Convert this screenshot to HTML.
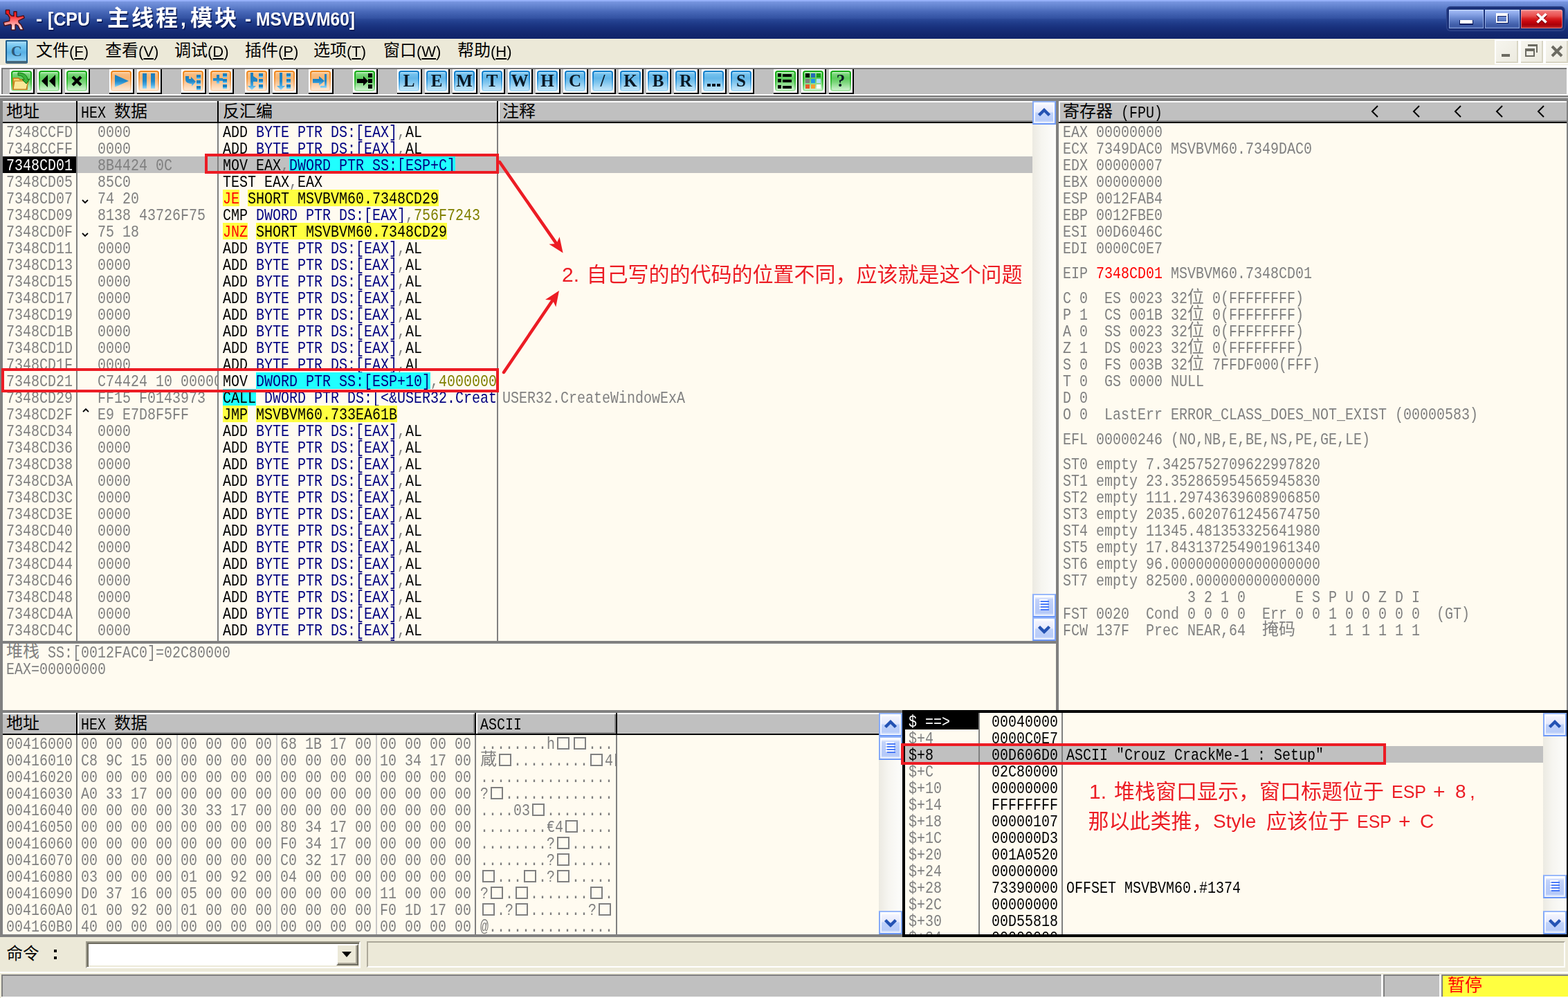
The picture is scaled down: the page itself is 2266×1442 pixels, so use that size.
<!DOCTYPE html><html><head><meta charset="utf-8"><title>OllyDbg</title><style>html,body{margin:0;padding:0;overflow:hidden}
body{width:2266px;height:1442px;overflow:hidden;background:#808080;position:relative;font-family:"Liberation Sans",sans-serif}
.a{position:absolute}
svg.a{overflow:visible}
.m{will-change:transform;position:absolute;height:24px;line-height:24px;font-family:"Liberation Mono",monospace;font-size:20px;white-space:pre;color:#000;transform:scaleY(1.215);transform-origin:0 4.84px}
.m i{font-style:normal}
.k{color:#000}.g{color:#808080}.b{color:#000080}.r{color:#f00}.o{color:#808000}.w{color:#fff}
.G{color:#808080}
.tt{will-change:transform;text-shadow:1.5px 1.5px 0 #0c1c58;top:9px;height:38px;line-height:38px;font-weight:bold;font-size:28px;color:#fff;white-space:pre}
.mn{will-change:transform;top:58px;height:34px;line-height:34px;font-size:22px;color:#000;white-space:pre}
.tl{will-change:transform;top:102px;width:30px;height:30px;line-height:30px;text-align:center;font:bold 25px/30px "Liberation Serif",serif;color:#0a1824}
.cj{position:absolute;white-space:pre;font-family:"Liberation Sans","Noto Sans CJK SC",sans-serif;color:#000}
.c24{font-size:24px;line-height:24px;height:24px}
.c30{font-size:30px;line-height:30px;height:30px;color:#ec1c24}
</style></head><body><svg width="0" height="0" style="position:absolute"><defs><linearGradient id="bg" x1="0" y1="0" x2="0" y2="1"><stop offset="0" stop-color="#1a7cbc"/><stop offset=".5" stop-color="#2088c8"/><stop offset=".75" stop-color="#48a8e0"/><stop offset="1" stop-color="#98dcfc"/></linearGradient></defs></svg><div class="a" style="left:0;top:0;width:2266px;height:56px;background:linear-gradient(#95b0f9 0,#95b0f9 2px,#7a98e2 2px,#7391dc 4px,#6080cc 10px,#4b6bbb 16px,#3c5cac 22px,#3453a3 26px,#294797 28px,#1e3a88 34px,#18307c 40px,#12266c 50px,#10246a 56px)"></div>
<svg class="a" style="left:4px;top:12px" width="32" height="32" viewBox="0 0 16 16"><defs><linearGradient id="sp" x1="0" y1="0" x2="0" y2="1"><stop offset="0" stop-color="#ff0c10"/><stop offset=".3" stop-color="#ff2c30"/><stop offset=".5" stop-color="#ff6a6a"/><stop offset=".7" stop-color="#ffa0a0"/><stop offset=".88" stop-color="#ffd8d8"/><stop offset="1" stop-color="#fff4f0"/></linearGradient></defs><g fill="url(#sp)" stroke="#4a1018" stroke-width=".7" stroke-linejoin="round"><path d="M2.2 1.2h2.6v2.6l1.4 1.6L8 5.6V2.4h2v3.6l1 .3 4-1 .6 1.6-4.2 2 .2 1.4 1.6 1.6 1.8 3.6h-2.4l-1.6-3-1.6-.9-.4.3V15.6H6.2V12l-.6-.4-4.4 1-.6-2.4 4.2-1 .2-2.4L3.6 4.6 2.2 4z"/></g></svg>
<div class="a tt" style="left:52px"><span style="display:inline-block;transform-origin:0 50%;transform:scaleX(0.965)">-</span></div>
<div class="a tt" style="left:69px"><span style="display:inline-block;transform-origin:0 50%;transform:scaleX(0.891)">[CPU</span></div>
<div class="a tt" style="left:139px"><span style="display:inline-block;transform-origin:0 50%;transform:scaleX(0.965)">-</span></div>
<div class="a tt" style="left:354px"><span style="display:inline-block;transform-origin:0 50%;transform:scaleX(0.965)">-</span></div>
<div class="a tt" style="left:370px"><span style="display:inline-block;transform-origin:0 50%;transform:scaleX(0.875)">MSVBVM60]</span></div>
<div class="a tt" style="left:155px;top:7px;font-size:32px;letter-spacing:3px;font-family:'Liberation Sans','Noto Sans CJK SC',sans-serif">主线程</div>
<div class="a tt" style="left:275px;top:7px;font-size:32px;letter-spacing:3px;font-family:'Liberation Sans','Noto Sans CJK SC',sans-serif">模块</div>
<div class="a tt" style="left:261px">,</div>
<div class="a" style="left:2091px;top:10px;width:170px;height:34px;border-radius:5px;background:#1b3179;box-shadow:0 0 0 1px #33498f"></div>
<div class="a" style="left:2094px;top:14px;width:50px;height:27px;background:linear-gradient(#cfe0ff 0,#9fb8f4 2px,#809de0 8px,#6684cc 13px,#4f6eb8 18px,#3d5aa5 23px,#4a68b4 27px);box-shadow:inset 0 0 0 1px rgba(200,220,255,.55)"></div>
<div class="a" style="left:2146px;top:14px;width:50px;height:27px;background:linear-gradient(#cfe0ff 0,#9fb8f4 2px,#809de0 8px,#6684cc 13px,#4f6eb8 18px,#3d5aa5 23px,#4a68b4 27px);box-shadow:inset 0 0 0 1px rgba(200,220,255,.55)"></div>
<div class="a" style="left:2198px;top:14px;width:60px;height:27px;background:linear-gradient(#f8a8a8 0,#f07070 3px,#e85050 9px,#d82020 13px,#c80810 17px,#a80008 22px,#c83030 27px);border-radius:0 3px 3px 0;box-shadow:inset 0 0 0 1px rgba(255,190,190,.5)"></div>
<div class="a" style="left:2109px;top:29px;width:20px;height:7px;background:#0a1c60;"></div>
<div class="a" style="left:2110px;top:29px;width:18px;height:5px;background:#fff;"></div>
<div class="a" style="left:2163px;top:20px;width:13px;height:8px;border:solid #0a1c60;border-width:4px 2px 2px 2px"></div>
<div class="a" style="left:2162px;top:19px;width:13px;height:8px;border:solid #fff;border-width:4px 2px 2px 2px"></div>
<svg class="a" style="left:2216px;top:16px" width="24" height="20" viewBox="0 0 24 20"><path d="M5.5 5L18.5 18M18.5 5L5.5 18" stroke="#8a0410" stroke-width="4.6"/><path d="M5.5 4L18.5 16.5M18.5 4L5.5 16.5" stroke="#fff" stroke-width="3.8"/></svg>
<div class="a" style="left:0px;top:56px;width:2266px;height:38px;background:#ece9d8;"></div>
<div class="a" style="left:0px;top:94px;width:2266px;height:4px;background:#fff;"></div>
<div class="a" style="left:8px;top:58px;width:32px;height:34px;background:#fff"></div>
<div class="a" style="left:8px;top:58px;width:28px;height:28px;border:2px solid #1c5c8c;border-bottom:4px solid #46687c;background:linear-gradient(#a8dcf8 0,#78c8f0 6px,#58b0e4 16px,#8ed0f4 28px);border-radius:2px"></div>
<div class="a" style="left:8px;top:60px;width:32px;height:26px;line-height:26px;text-align:center;font:bold 22px/27px 'Liberation Serif',serif;color:#2c5878">C</div>
<div class="cj c24" style="left:52px;top:61px">文件</div>
<div class="a mn" style="left:100px">(<u>F</u>)</div>
<div class="cj c24" style="left:152px;top:61px">查看</div>
<div class="a mn" style="left:200px">(<u>V</u>)</div>
<div class="cj c24" style="left:252px;top:61px">调试</div>
<div class="a mn" style="left:300px">(<u>D</u>)</div>
<div class="cj c24" style="left:354px;top:61px">插件</div>
<div class="a mn" style="left:402px">(<u>P</u>)</div>
<div class="cj c24" style="left:453px;top:61px">选项</div>
<div class="a mn" style="left:501px">(<u>T</u>)</div>
<div class="cj c24" style="left:554px;top:61px">窗口</div>
<div class="a mn" style="left:602px">(<u>W</u>)</div>
<div class="cj c24" style="left:661px;top:61px">帮助</div>
<div class="a mn" style="left:709px">(<u>H</u>)</div>
<div class="a" style="left:2160px;top:57px;width:36px;height:36px;background:#fff"></div>
<div class="a" style="left:2162px;top:59px;width:32px;height:32px;background:linear-gradient(135deg,#f6f5ee,#eceadf);box-shadow:inset -2px -2px 0 #d8d5c4"></div>
<div class="a" style="left:2196px;top:57px;width:36px;height:36px;background:#fff"></div>
<div class="a" style="left:2198px;top:59px;width:32px;height:32px;background:linear-gradient(135deg,#f6f5ee,#eceadf);box-shadow:inset -2px -2px 0 #d8d5c4"></div>
<div class="a" style="left:2232px;top:57px;width:36px;height:36px;background:#fff"></div>
<div class="a" style="left:2234px;top:59px;width:32px;height:32px;background:linear-gradient(135deg,#f6f5ee,#eceadf);box-shadow:inset -2px -2px 0 #d8d5c4"></div>
<div class="a" style="left:2170px;top:78px;width:12px;height:4px;background:#6c6b62;"></div>
<div class="a" style="left:2204px;top:70px;width:10px;height:6px;border:solid #6c6b62;border-width:4px 2px 2px 2px"></div>
<div class="a" style="left:2208px;top:64px;width:12px;height:9px;border:solid #6c6b62;border-width:3px 2px 0 0"></div>
<svg class="a" style="left:2241px;top:65px" width="18" height="18" viewBox="0 0 18 18"><path d="M2 2L16 16M16 2L2 16" stroke="#6c6b62" stroke-width="4"/></svg>
<div class="a" style="left:0px;top:98px;width:2px;height:40px;background:#fff;"></div>
<div class="a" style="left:2px;top:98px;width:2262px;height:40px;background:#c0c0c0;border-top:2px solid #787878;border-left:2px solid #787878;box-sizing:border-box"></div>
<div class="a" style="left:2264px;top:98px;width:2px;height:40px;background:#fff;"></div>
<div class="a" style="left:0px;top:136px;width:2266px;height:2px;background:#fff;"></div>
<div class="a" style="left:0px;top:138px;width:2266px;height:2px;background:#787878;"></div>
<div class="a" style="left:0px;top:140px;width:2266px;height:2px;background:#c0c0c0;"></div>
<div class="a" style="left:0px;top:1354px;width:2266px;height:50px;background:#ece9d8;"></div>
<div class="a" style="left:0px;top:1404px;width:2266px;height:2px;background:#fff;"></div>
<div class="cj" style="left:9.5px;top:1366px;font-size:23.5px;line-height:24px;height:24px">命令</div>
<div class="a" style="left:78px;top:1372px;width:4px;height:4px;background:#000;"></div>
<div class="a" style="left:78px;top:1382px;width:4px;height:4px;background:#000;"></div>
<div class="a" style="left:124px;top:1360px;width:397px;height:39px;box-sizing:border-box;background:#fff;border:2px solid;border-color:#9d9a8c #fff #fff #9d9a8c;box-shadow:inset 2px 2px 0 #6e6c60,inset -2px -2px 0 #ece9d8"></div>
<div class="a" style="left:486px;top:1364px;width:32px;height:31px;box-sizing:border-box;background:#ece9d8;border:2px solid;border-color:#fff #6e6c60 #6e6c60 #fff;box-shadow:inset -2px -2px 0 #aca899"></div>
<svg class="a" style="left:494px;top:1375px" width="16" height="9" viewBox="0 0 16 9"><path d="M0 0H14L7 8Z" fill="#000"/></svg>
<div class="a" style="left:530px;top:1360px;width:1732px;height:38px;box-sizing:border-box;border:2px solid;border-color:#aca899 #fff #fff #aca899"></div>
<div class="a" style="left:0px;top:1406px;width:2266px;height:36px;background:#c0c0c0;"></div>
<div class="a" style="left:0px;top:1406px;width:2266px;height:2px;background:#ece9d8;"></div>
<div class="a" style="left:2px;top:1408px;width:1994px;height:32px;background:#c0c0c0;box-sizing:border-box;border-top:2px solid #808080;border-left:2px solid #808080"></div>
<div class="a" style="left:1996px;top:1408px;width:3px;height:34px;background:#fff;"></div>
<div class="a" style="left:1999px;top:1408px;width:81px;height:32px;background:#c0c0c0;box-sizing:border-box;border-top:2px solid #808080;border-left:2px solid #808080"></div>
<div class="a" style="left:2080px;top:1408px;width:3px;height:34px;background:#fff;"></div>
<div class="a" style="left:2083px;top:1408px;width:183px;height:32px;background:#ffff40;box-sizing:border-box;border-top:2px solid #808080;border-left:2px solid #808080"></div>
<div class="a" style="left:0px;top:1440px;width:2266px;height:2px;background:#fff;"></div>
<div class="a" style="left:0px;top:1406px;width:2px;height:36px;background:#ece9d8;"></div>
<div class="cj" style="left:2092px;top:1411px;font-size:25px;line-height:25px;height:25px;color:#f00">暂停</div>
<div class="a" style="left:14px;top:100px;width:36px;height:36px;background:#000;"></div><div class="a" style="left:14px;top:100px;width:34px;height:34px;background:#fff;"></div><div class="a" style="left:16px;top:102px;width:30px;height:30px;box-sizing:border-box;border:2px solid transparent;border-radius:4px;background:linear-gradient(#c4f0c4 0,#7ad67a 3px,#5ccb5c 9px,#7cd67c 15px,#a8e6a8 21px,#cdf2cd 26px,#dcf6dc 30px) padding-box,linear-gradient(#16aa16 0,#22b222 35%,#4cc44c 65%,#8cdc8c 88%,#b4e8b4 100%) border-box"></div><svg class="a" style="left:16px;top:102px" width="30" height="30" viewBox="0 0 30 30"><path d="M3 11h8l2 2h10v14H3z" fill="#f6d470" stroke="#c47a14" stroke-width="1.6"/><path d="M5 15h20l-3 12H3z" fill="#fbe898" stroke="#c47a14" stroke-width="1.2"/><path d="M10 3c8 0 13 3 14 10l3-1-5 7-6-6 3 0c-1-4-4-6-9-6z" fill="#3cb43c" stroke="#107010" stroke-width="1"/></svg>
<div class="a" style="left:54px;top:100px;width:36px;height:36px;background:#000;"></div><div class="a" style="left:54px;top:100px;width:34px;height:34px;background:#fff;"></div><div class="a" style="left:56px;top:102px;width:30px;height:30px;box-sizing:border-box;border:2px solid transparent;border-radius:4px;background:linear-gradient(#c4f0c4 0,#7ad67a 3px,#5ccb5c 9px,#7cd67c 15px,#a8e6a8 21px,#cdf2cd 26px,#dcf6dc 30px) padding-box,linear-gradient(#16aa16 0,#22b222 35%,#4cc44c 65%,#8cdc8c 88%,#b4e8b4 100%) border-box"></div><svg class="a" style="left:56px;top:102px" width="30" height="30" viewBox="0 0 30 30"><path d="M4 15l9-9v18zM15 15l9-9v18z" fill="#000"/></svg>
<div class="a" style="left:94px;top:100px;width:36px;height:36px;background:#000;"></div><div class="a" style="left:94px;top:100px;width:34px;height:34px;background:#fff;"></div><div class="a" style="left:96px;top:102px;width:30px;height:30px;box-sizing:border-box;border:2px solid transparent;border-radius:4px;background:linear-gradient(#c4f0c4 0,#7ad67a 3px,#5ccb5c 9px,#7cd67c 15px,#a8e6a8 21px,#cdf2cd 26px,#dcf6dc 30px) padding-box,linear-gradient(#16aa16 0,#22b222 35%,#4cc44c 65%,#8cdc8c 88%,#b4e8b4 100%) border-box"></div><svg class="a" style="left:96px;top:102px" width="30" height="30" viewBox="0 0 30 30"><path d="M9 9l12 12M21 9L9 21" stroke="#000" stroke-width="4.2"/></svg>
<div class="a" style="left:158px;top:100px;width:36px;height:36px;background:#000;"></div><div class="a" style="left:158px;top:100px;width:34px;height:34px;background:#fff;"></div><div class="a" style="left:160px;top:102px;width:30px;height:30px;box-sizing:border-box;border:2px solid transparent;border-radius:4px;background:linear-gradient(#fcd8b0 0,#f9bc80 3px,#f8b573 9px,#fac595 15px,#fcd9b8 21px,#fde8d2 26px,#fef0e0 30px) padding-box,linear-gradient(#ee8418 0,#f29434 35%,#f6b070 65%,#fad0a8 88%,#fde0c8 100%) border-box"></div><svg class="a" style="left:160px;top:102px" width="30" height="30" viewBox="0 0 30 30"><path d="M6 6l20 9-20 9z" fill="url(#bg)"/></svg>
<div class="a" style="left:198px;top:100px;width:36px;height:36px;background:#000;"></div><div class="a" style="left:198px;top:100px;width:34px;height:34px;background:#fff;"></div><div class="a" style="left:200px;top:102px;width:30px;height:30px;box-sizing:border-box;border:2px solid transparent;border-radius:4px;background:linear-gradient(#fcd8b0 0,#f9bc80 3px,#f8b573 9px,#fac595 15px,#fcd9b8 21px,#fde8d2 26px,#fef0e0 30px) padding-box,linear-gradient(#ee8418 0,#f29434 35%,#f6b070 65%,#fad0a8 88%,#fde0c8 100%) border-box"></div><svg class="a" style="left:200px;top:102px" width="30" height="30" viewBox="0 0 30 30"><path d="M6 4h6v22H6zM18 4h6v22h-6z" fill="url(#bg)"/></svg>
<div class="a" style="left:262px;top:100px;width:36px;height:36px;background:#000;"></div><div class="a" style="left:262px;top:100px;width:34px;height:34px;background:#fff;"></div><div class="a" style="left:264px;top:102px;width:30px;height:30px;box-sizing:border-box;border:2px solid transparent;border-radius:4px;background:linear-gradient(#fcd8b0 0,#f9bc80 3px,#f8b573 9px,#fac595 15px,#fcd9b8 21px,#fde8d2 26px,#fef0e0 30px) padding-box,linear-gradient(#ee8418 0,#f29434 35%,#f6b070 65%,#fad0a8 88%,#fde0c8 100%) border-box"></div><svg class="a" style="left:264px;top:102px" width="30" height="30" viewBox="0 0 30 30"><path d="M4 8h5v4l3 0v-3l7 7-6 7v-4l-2 0c-5-1-7-3-7-7z" fill="url(#bg)"/><rect x="20" y="6" width="6" height="4" fill="#1a80c0"/><rect x="20" y="10" width="6" height="2" fill="#62c0f2"/><rect x="20" y="14" width="6" height="4" fill="#1a80c0"/><rect x="20" y="18" width="6" height="2" fill="#62c0f2"/><rect x="20" y="22" width="6" height="4" fill="#1a80c0"/><rect x="20" y="26" width="6" height="2" fill="#62c0f2"/></svg>
<div class="a" style="left:302px;top:100px;width:36px;height:36px;background:#000;"></div><div class="a" style="left:302px;top:100px;width:34px;height:34px;background:#fff;"></div><div class="a" style="left:304px;top:102px;width:30px;height:30px;box-sizing:border-box;border:2px solid transparent;border-radius:4px;background:linear-gradient(#fcd8b0 0,#f9bc80 3px,#f8b573 9px,#fac595 15px,#fcd9b8 21px,#fde8d2 26px,#fef0e0 30px) padding-box,linear-gradient(#ee8418 0,#f29434 35%,#f6b070 65%,#fad0a8 88%,#fde0c8 100%) border-box"></div><svg class="a" style="left:304px;top:102px" width="30" height="30" viewBox="0 0 30 30"><path d="M9 6h4v5h5v4h-5v4h-4v-4H4v-4h5z" fill="url(#bg)"/><rect x="18" y="4" width="6" height="4" fill="#1a80c0"/><rect x="18" y="8" width="6" height="2" fill="#62c0f2"/><rect x="18" y="12" width="6" height="4" fill="#1a80c0"/><rect x="18" y="16" width="6" height="2" fill="#62c0f2"/><rect x="18" y="20" width="6" height="4" fill="#1a80c0"/><rect x="18" y="24" width="6" height="2" fill="#62c0f2"/></svg>
<div class="a" style="left:354px;top:100px;width:36px;height:36px;background:#000;"></div><div class="a" style="left:354px;top:100px;width:34px;height:34px;background:#fff;"></div><div class="a" style="left:356px;top:102px;width:30px;height:30px;box-sizing:border-box;border:2px solid transparent;border-radius:4px;background:linear-gradient(#fcd8b0 0,#f9bc80 3px,#f8b573 9px,#fac595 15px,#fcd9b8 21px,#fde8d2 26px,#fef0e0 30px) padding-box,linear-gradient(#ee8418 0,#f29434 35%,#f6b070 65%,#fad0a8 88%,#fde0c8 100%) border-box"></div><svg class="a" style="left:356px;top:102px" width="30" height="30" viewBox="0 0 30 30"><path d="M6 3h4v5l6 4v4h-6v6h4l-6 6-6-6h4z" fill="url(#bg)"/><rect x="18" y="4" width="6" height="4" fill="#1a80c0"/><rect x="18" y="8" width="6" height="2" fill="#62c0f2"/><rect x="18" y="12" width="6" height="4" fill="#1a80c0"/><rect x="18" y="16" width="6" height="2" fill="#62c0f2"/><rect x="18" y="20" width="6" height="4" fill="#1a80c0"/><rect x="18" y="24" width="6" height="2" fill="#62c0f2"/></svg>
<div class="a" style="left:394px;top:100px;width:36px;height:36px;background:#000;"></div><div class="a" style="left:394px;top:100px;width:34px;height:34px;background:#fff;"></div><div class="a" style="left:396px;top:102px;width:30px;height:30px;box-sizing:border-box;border:2px solid transparent;border-radius:4px;background:linear-gradient(#fcd8b0 0,#f9bc80 3px,#f8b573 9px,#fac595 15px,#fcd9b8 21px,#fde8d2 26px,#fef0e0 30px) padding-box,linear-gradient(#ee8418 0,#f29434 35%,#f6b070 65%,#fad0a8 88%,#fde0c8 100%) border-box"></div><svg class="a" style="left:396px;top:102px" width="30" height="30" viewBox="0 0 30 30"><path d="M8 3h4v19h4l-6 6-6-6h4z" fill="url(#bg)"/><rect x="18" y="4" width="6" height="4" fill="#1a80c0"/><rect x="18" y="8" width="6" height="2" fill="#62c0f2"/><rect x="18" y="12" width="6" height="4" fill="#1a80c0"/><rect x="18" y="16" width="6" height="2" fill="#62c0f2"/><rect x="18" y="20" width="6" height="4" fill="#1a80c0"/><rect x="18" y="24" width="6" height="2" fill="#62c0f2"/></svg>
<div class="a" style="left:446px;top:100px;width:36px;height:36px;background:#000;"></div><div class="a" style="left:446px;top:100px;width:34px;height:34px;background:#fff;"></div><div class="a" style="left:448px;top:102px;width:30px;height:30px;box-sizing:border-box;border:2px solid transparent;border-radius:4px;background:linear-gradient(#fcd8b0 0,#f9bc80 3px,#f8b573 9px,#fac595 15px,#fcd9b8 21px,#fde8d2 26px,#fef0e0 30px) padding-box,linear-gradient(#ee8418 0,#f29434 35%,#f6b070 65%,#fad0a8 88%,#fde0c8 100%) border-box"></div><svg class="a" style="left:448px;top:102px" width="30" height="30" viewBox="0 0 30 30"><path d="M4 12h9V8l8 7-8 7v-4H4z" fill="url(#bg)"/><path d="M21 5h3v20h-9v-3h6z" fill="url(#bg)"/></svg>
<div class="a" style="left:510px;top:100px;width:36px;height:36px;background:#000;"></div><div class="a" style="left:510px;top:100px;width:34px;height:34px;background:#fff;"></div><div class="a" style="left:512px;top:102px;width:30px;height:30px;box-sizing:border-box;border:2px solid transparent;border-radius:4px;background:linear-gradient(#c4f0c4 0,#7ad67a 3px,#5ccb5c 9px,#7cd67c 15px,#a8e6a8 21px,#cdf2cd 26px,#dcf6dc 30px) padding-box,linear-gradient(#16aa16 0,#22b222 35%,#4cc44c 65%,#8cdc8c 88%,#b4e8b4 100%) border-box"></div><svg class="a" style="left:512px;top:102px" width="30" height="30" viewBox="0 0 30 30"><path d="M4 12h9V8l7 7-7 7v-4H4z" fill="#000"/><rect x="20" y="4" width="6" height="6" fill="#000"/><rect x="20" y="12" width="6" height="6" fill="#000"/><rect x="20" y="20" width="6" height="6" fill="#000"/></svg>
<div class="a" style="left:574px;top:100px;width:36px;height:36px;background:#000;"></div><div class="a" style="left:574px;top:100px;width:34px;height:34px;background:#fff;"></div><div class="a" style="left:576px;top:102px;width:30px;height:30px;box-sizing:border-box;border:2px solid transparent;border-radius:4px;background:linear-gradient(#b4e0fa 0,#74c2ee 3px,#62b6e8 9px,#80c6ee 15px,#a6d8f5 21px,#c2e6fa 26px,#d0ecfc 30px) padding-box,linear-gradient(#0f7cc8 0,#2088d2 35%,#56acE4 65%,#94d0f2 88%,#b8e0f8 100%) border-box"></div><div class="a tl" style="left:576px">L</div>
<div class="a" style="left:614px;top:100px;width:36px;height:36px;background:#000;"></div><div class="a" style="left:614px;top:100px;width:34px;height:34px;background:#fff;"></div><div class="a" style="left:616px;top:102px;width:30px;height:30px;box-sizing:border-box;border:2px solid transparent;border-radius:4px;background:linear-gradient(#b4e0fa 0,#74c2ee 3px,#62b6e8 9px,#80c6ee 15px,#a6d8f5 21px,#c2e6fa 26px,#d0ecfc 30px) padding-box,linear-gradient(#0f7cc8 0,#2088d2 35%,#56acE4 65%,#94d0f2 88%,#b8e0f8 100%) border-box"></div><div class="a tl" style="left:616px">E</div>
<div class="a" style="left:654px;top:100px;width:36px;height:36px;background:#000;"></div><div class="a" style="left:654px;top:100px;width:34px;height:34px;background:#fff;"></div><div class="a" style="left:656px;top:102px;width:30px;height:30px;box-sizing:border-box;border:2px solid transparent;border-radius:4px;background:linear-gradient(#b4e0fa 0,#74c2ee 3px,#62b6e8 9px,#80c6ee 15px,#a6d8f5 21px,#c2e6fa 26px,#d0ecfc 30px) padding-box,linear-gradient(#0f7cc8 0,#2088d2 35%,#56acE4 65%,#94d0f2 88%,#b8e0f8 100%) border-box"></div><div class="a tl" style="left:656px">M</div>
<div class="a" style="left:694px;top:100px;width:36px;height:36px;background:#000;"></div><div class="a" style="left:694px;top:100px;width:34px;height:34px;background:#fff;"></div><div class="a" style="left:696px;top:102px;width:30px;height:30px;box-sizing:border-box;border:2px solid transparent;border-radius:4px;background:linear-gradient(#b4e0fa 0,#74c2ee 3px,#62b6e8 9px,#80c6ee 15px,#a6d8f5 21px,#c2e6fa 26px,#d0ecfc 30px) padding-box,linear-gradient(#0f7cc8 0,#2088d2 35%,#56acE4 65%,#94d0f2 88%,#b8e0f8 100%) border-box"></div><div class="a tl" style="left:696px">T</div>
<div class="a" style="left:734px;top:100px;width:36px;height:36px;background:#000;"></div><div class="a" style="left:734px;top:100px;width:34px;height:34px;background:#fff;"></div><div class="a" style="left:736px;top:102px;width:30px;height:30px;box-sizing:border-box;border:2px solid transparent;border-radius:4px;background:linear-gradient(#b4e0fa 0,#74c2ee 3px,#62b6e8 9px,#80c6ee 15px,#a6d8f5 21px,#c2e6fa 26px,#d0ecfc 30px) padding-box,linear-gradient(#0f7cc8 0,#2088d2 35%,#56acE4 65%,#94d0f2 88%,#b8e0f8 100%) border-box"></div><div class="a tl" style="left:736px">W</div>
<div class="a" style="left:774px;top:100px;width:36px;height:36px;background:#000;"></div><div class="a" style="left:774px;top:100px;width:34px;height:34px;background:#fff;"></div><div class="a" style="left:776px;top:102px;width:30px;height:30px;box-sizing:border-box;border:2px solid transparent;border-radius:4px;background:linear-gradient(#b4e0fa 0,#74c2ee 3px,#62b6e8 9px,#80c6ee 15px,#a6d8f5 21px,#c2e6fa 26px,#d0ecfc 30px) padding-box,linear-gradient(#0f7cc8 0,#2088d2 35%,#56acE4 65%,#94d0f2 88%,#b8e0f8 100%) border-box"></div><div class="a tl" style="left:776px">H</div>
<div class="a" style="left:814px;top:100px;width:36px;height:36px;background:#000;"></div><div class="a" style="left:814px;top:100px;width:34px;height:34px;background:#fff;"></div><div class="a" style="left:816px;top:102px;width:30px;height:30px;box-sizing:border-box;border:2px solid transparent;border-radius:4px;background:linear-gradient(#b4e0fa 0,#74c2ee 3px,#62b6e8 9px,#80c6ee 15px,#a6d8f5 21px,#c2e6fa 26px,#d0ecfc 30px) padding-box,linear-gradient(#0f7cc8 0,#2088d2 35%,#56acE4 65%,#94d0f2 88%,#b8e0f8 100%) border-box"></div><div class="a tl" style="left:816px">C</div>
<div class="a" style="left:854px;top:100px;width:36px;height:36px;background:#000;"></div><div class="a" style="left:854px;top:100px;width:34px;height:34px;background:#fff;"></div><div class="a" style="left:856px;top:102px;width:30px;height:30px;box-sizing:border-box;border:2px solid transparent;border-radius:4px;background:linear-gradient(#b4e0fa 0,#74c2ee 3px,#62b6e8 9px,#80c6ee 15px,#a6d8f5 21px,#c2e6fa 26px,#d0ecfc 30px) padding-box,linear-gradient(#0f7cc8 0,#2088d2 35%,#56acE4 65%,#94d0f2 88%,#b8e0f8 100%) border-box"></div><div class="a tl" style="left:856px">/</div>
<div class="a" style="left:894px;top:100px;width:36px;height:36px;background:#000;"></div><div class="a" style="left:894px;top:100px;width:34px;height:34px;background:#fff;"></div><div class="a" style="left:896px;top:102px;width:30px;height:30px;box-sizing:border-box;border:2px solid transparent;border-radius:4px;background:linear-gradient(#b4e0fa 0,#74c2ee 3px,#62b6e8 9px,#80c6ee 15px,#a6d8f5 21px,#c2e6fa 26px,#d0ecfc 30px) padding-box,linear-gradient(#0f7cc8 0,#2088d2 35%,#56acE4 65%,#94d0f2 88%,#b8e0f8 100%) border-box"></div><div class="a tl" style="left:896px">K</div>
<div class="a" style="left:934px;top:100px;width:36px;height:36px;background:#000;"></div><div class="a" style="left:934px;top:100px;width:34px;height:34px;background:#fff;"></div><div class="a" style="left:936px;top:102px;width:30px;height:30px;box-sizing:border-box;border:2px solid transparent;border-radius:4px;background:linear-gradient(#b4e0fa 0,#74c2ee 3px,#62b6e8 9px,#80c6ee 15px,#a6d8f5 21px,#c2e6fa 26px,#d0ecfc 30px) padding-box,linear-gradient(#0f7cc8 0,#2088d2 35%,#56acE4 65%,#94d0f2 88%,#b8e0f8 100%) border-box"></div><div class="a tl" style="left:936px">B</div>
<div class="a" style="left:974px;top:100px;width:36px;height:36px;background:#000;"></div><div class="a" style="left:974px;top:100px;width:34px;height:34px;background:#fff;"></div><div class="a" style="left:976px;top:102px;width:30px;height:30px;box-sizing:border-box;border:2px solid transparent;border-radius:4px;background:linear-gradient(#b4e0fa 0,#74c2ee 3px,#62b6e8 9px,#80c6ee 15px,#a6d8f5 21px,#c2e6fa 26px,#d0ecfc 30px) padding-box,linear-gradient(#0f7cc8 0,#2088d2 35%,#56acE4 65%,#94d0f2 88%,#b8e0f8 100%) border-box"></div><div class="a tl" style="left:976px">R</div>
<div class="a" style="left:1014px;top:100px;width:36px;height:36px;background:#000;"></div><div class="a" style="left:1014px;top:100px;width:34px;height:34px;background:#fff;"></div><div class="a" style="left:1016px;top:102px;width:30px;height:30px;box-sizing:border-box;border:2px solid transparent;border-radius:4px;background:linear-gradient(#b4e0fa 0,#74c2ee 3px,#62b6e8 9px,#80c6ee 15px,#a6d8f5 21px,#c2e6fa 26px,#d0ecfc 30px) padding-box,linear-gradient(#0f7cc8 0,#2088d2 35%,#56acE4 65%,#94d0f2 88%,#b8e0f8 100%) border-box"></div>
<div class="a" style="left:1022px;top:121px;width:5px;height:4px;background:#0a1420;"></div>
<div class="a" style="left:1029px;top:121px;width:5px;height:4px;background:#0a1420;"></div>
<div class="a" style="left:1036px;top:121px;width:5px;height:4px;background:#0a1420;"></div>
<div class="a" style="left:1054px;top:100px;width:36px;height:36px;background:#000;"></div><div class="a" style="left:1054px;top:100px;width:34px;height:34px;background:#fff;"></div><div class="a" style="left:1056px;top:102px;width:30px;height:30px;box-sizing:border-box;border:2px solid transparent;border-radius:4px;background:linear-gradient(#b4e0fa 0,#74c2ee 3px,#62b6e8 9px,#80c6ee 15px,#a6d8f5 21px,#c2e6fa 26px,#d0ecfc 30px) padding-box,linear-gradient(#0f7cc8 0,#2088d2 35%,#56acE4 65%,#94d0f2 88%,#b8e0f8 100%) border-box"></div><div class="a tl" style="left:1056px">S</div>
<div class="a" style="left:1118px;top:100px;width:36px;height:36px;background:#000;"></div><div class="a" style="left:1118px;top:100px;width:34px;height:34px;background:#fff;"></div><div class="a" style="left:1120px;top:102px;width:30px;height:30px;box-sizing:border-box;border:2px solid transparent;border-radius:4px;background:linear-gradient(#c4f0c4 0,#7ad67a 3px,#5ccb5c 9px,#7cd67c 15px,#a8e6a8 21px,#cdf2cd 26px,#dcf6dc 30px) padding-box,linear-gradient(#16aa16 0,#22b222 35%,#4cc44c 65%,#8cdc8c 88%,#b4e8b4 100%) border-box"></div><svg class="a" style="left:1120px;top:102px" width="30" height="30" viewBox="0 0 30 30"><rect x="4" y="4" width="5" height="5" fill="#000"/><rect x="11" y="5" width="13" height="4" fill="#000"/><rect x="4" y="12" width="5" height="5" fill="#000"/><rect x="11" y="13" width="13" height="4" fill="#000"/><rect x="4" y="21" width="5" height="5" fill="#000"/><rect x="11" y="22" width="13" height="4" fill="#000"/></svg>
<div class="a" style="left:1158px;top:100px;width:36px;height:36px;background:#000;"></div><div class="a" style="left:1158px;top:100px;width:34px;height:34px;background:#fff;"></div><div class="a" style="left:1160px;top:102px;width:30px;height:30px;box-sizing:border-box;border:2px solid transparent;border-radius:4px;background:linear-gradient(#c4f0c4 0,#7ad67a 3px,#5ccb5c 9px,#7cd67c 15px,#a8e6a8 21px,#cdf2cd 26px,#dcf6dc 30px) padding-box,linear-gradient(#16aa16 0,#22b222 35%,#4cc44c 65%,#8cdc8c 88%,#b4e8b4 100%) border-box"></div><svg class="a" style="left:1160px;top:102px" width="30" height="30" viewBox="0 0 30 30"><rect x="4" y="4" width="6" height="6" fill="#000"/><rect x="12" y="4" width="6" height="6" fill="#2468b8"/><rect x="20" y="4" width="6" height="6" fill="#189818"/><rect x="4" y="12" width="6" height="6" fill="#808080"/><rect x="12" y="12" width="6" height="6" fill="#2098e8"/><rect x="20" y="12" width="6" height="6" fill="#b0e0ff"/><rect x="4" y="20" width="6" height="6" fill="#e85828"/><rect x="12" y="20" width="6" height="6" fill="#f8a030"/><rect x="20" y="20" width="6" height="6" fill="#fff"/></svg>
<div class="a" style="left:1198px;top:100px;width:36px;height:36px;background:#000;"></div><div class="a" style="left:1198px;top:100px;width:34px;height:34px;background:#fff;"></div><div class="a" style="left:1200px;top:102px;width:30px;height:30px;box-sizing:border-box;border:2px solid transparent;border-radius:4px;background:linear-gradient(#c4f0c4 0,#7ad67a 3px,#5ccb5c 9px,#7cd67c 15px,#a8e6a8 21px,#cdf2cd 26px,#dcf6dc 30px) padding-box,linear-gradient(#16aa16 0,#22b222 35%,#4cc44c 65%,#8cdc8c 88%,#b4e8b4 100%) border-box"></div><div class="a tl" style="left:1200px">?</div>
<div class="a" style="left:4px;top:142px;width:2260px;height:1212px;background:#808080;"></div>
<div class="a" style="left:4px;top:178px;width:1488px;height:748px;background:#fffbf0;"></div>
<div class="a" style="left:4px;top:146px;width:1488px;height:32px;background:#c0c0c0;"></div><div class="a" style="left:4px;top:146px;width:1488px;height:2px;background:#fff;"></div><div class="a" style="left:4px;top:176px;width:1488px;height:2px;background:#000;"></div>
<div class="a" style="left:110px;top:146px;width:2px;height:32px;background:#000;"></div>
<div class="a" style="left:110px;top:178px;width:2px;height:748px;background:#808080;"></div>
<div class="a" style="left:314px;top:146px;width:2px;height:32px;background:#000;"></div>
<div class="a" style="left:314px;top:178px;width:2px;height:748px;background:#808080;"></div>
<div class="a" style="left:718px;top:146px;width:2px;height:32px;background:#000;"></div>
<div class="a" style="left:718px;top:178px;width:2px;height:748px;background:#808080;"></div>
<div class="a" style="left:720px;top:148px;width:2px;height:28px;background:#fff;"></div>
<div class="a" style="left:722px;top:174px;width:770px;height:2px;background:#8a8a8a;"></div>
<div class="cj c24" style="left:9px;top:149px">地址</div>
<div class="m" style="left:117px;top:150px">HEX</div><div class="cj c24" style="left:165px;top:149px">数据</div>
<div class="cj c24" style="left:322px;top:149px">反汇编</div>
<div class="cj c24" style="left:726px;top:149px">注释</div>
<div class="a" style="left:4px;top:226px;width:106px;height:24px;background:#000;"></div>
<div class="a" style="left:112px;top:226px;width:1380px;height:24px;background:#c0c0c0;"></div>
<div class="a" style="left:314px;top:226px;width:2px;height:24px;background:#808080;"></div>
<div class="a" style="left:718px;top:226px;width:2px;height:24px;background:#808080;"></div>
<div class="a" style="left:4px;top:178px;width:1488px;height:748px;overflow:hidden">
<div class="m" style="left:5px;top:0px;"><i class="g">7348CCFD</i></div>
<div class="m" style="left:113px;top:0px;width:197px;overflow:hidden;"><i class="g">  0000</i></div>
<div class="m" style="left:318px;top:0px;width:396px;overflow:hidden;">ADD <i class="b">BYTE PTR DS:[EAX]</i><i class="g">,</i>AL</div>
<div class="m" style="left:5px;top:24px;"><i class="g">7348CCFF</i></div>
<div class="m" style="left:113px;top:24px;width:197px;overflow:hidden;"><i class="g">  0000</i></div>
<div class="m" style="left:318px;top:24px;width:396px;overflow:hidden;">ADD <i class="b">BYTE PTR DS:[EAX]</i><i class="g">,</i>AL</div>
<div class="m" style="left:5px;top:48px;"><i class="w">7348CD01</i></div>
<div class="m" style="left:113px;top:48px;width:197px;overflow:hidden;"><i class="g">  8B4424 0C</i></div>
<div class="a" style="left:414px;top:48px;width:240px;height:24px;background:#20ffff;"></div><div class="m" style="left:318px;top:48px;width:396px;overflow:hidden;">MOV EAX<i class="g">,</i><i class="b">DWORD PTR SS:[ESP+C]</i></div>
<div class="m" style="left:5px;top:72px;"><i class="g">7348CD05</i></div>
<div class="m" style="left:113px;top:72px;width:197px;overflow:hidden;"><i class="g">  85C0</i></div>
<div class="m" style="left:318px;top:72px;width:396px;overflow:hidden;">TEST EAX<i class="g">,</i>EAX</div>
<div class="m" style="left:5px;top:96px;"><i class="g">7348CD07</i></div>
<div class="m" style="left:113px;top:96px;width:197px;overflow:hidden;"><i class="g">  74 20</i></div>
<svg class="a" style="left:114px;top:110px" width="10" height="6" viewBox="0 0 10 6"><path d="M1 1L5 5L9 1" fill="none" stroke="#000" stroke-width="1.8"/></svg>
<div class="a" style="left:318px;top:96px;width:24px;height:24px;background:#ffff40;"></div><div class="a" style="left:354px;top:96px;width:276px;height:24px;background:#ffff40;"></div><div class="m" style="left:318px;top:96px;width:396px;overflow:hidden;"><i class="r">JE</i> SHORT MSVBVM60.7348CD29</div>
<div class="m" style="left:5px;top:120px;"><i class="g">7348CD09</i></div>
<div class="m" style="left:113px;top:120px;width:197px;overflow:hidden;"><i class="g">  8138 43726F75</i></div>
<div class="m" style="left:318px;top:120px;width:396px;overflow:hidden;">CMP <i class="b">DWORD PTR DS:[EAX]</i><i class="g">,</i><i class="o">756F7243</i></div>
<div class="m" style="left:5px;top:144px;"><i class="g">7348CD0F</i></div>
<div class="m" style="left:113px;top:144px;width:197px;overflow:hidden;"><i class="g">  75 18</i></div>
<svg class="a" style="left:114px;top:158px" width="10" height="6" viewBox="0 0 10 6"><path d="M1 1L5 5L9 1" fill="none" stroke="#000" stroke-width="1.8"/></svg>
<div class="a" style="left:318px;top:144px;width:36px;height:24px;background:#ffff40;"></div><div class="a" style="left:366px;top:144px;width:276px;height:24px;background:#ffff40;"></div><div class="m" style="left:318px;top:144px;width:396px;overflow:hidden;"><i class="r">JNZ</i> SHORT MSVBVM60.7348CD29</div>
<div class="m" style="left:5px;top:168px;"><i class="g">7348CD11</i></div>
<div class="m" style="left:113px;top:168px;width:197px;overflow:hidden;"><i class="g">  0000</i></div>
<div class="m" style="left:318px;top:168px;width:396px;overflow:hidden;">ADD <i class="b">BYTE PTR DS:[EAX]</i><i class="g">,</i>AL</div>
<div class="m" style="left:5px;top:192px;"><i class="g">7348CD13</i></div>
<div class="m" style="left:113px;top:192px;width:197px;overflow:hidden;"><i class="g">  0000</i></div>
<div class="m" style="left:318px;top:192px;width:396px;overflow:hidden;">ADD <i class="b">BYTE PTR DS:[EAX]</i><i class="g">,</i>AL</div>
<div class="m" style="left:5px;top:216px;"><i class="g">7348CD15</i></div>
<div class="m" style="left:113px;top:216px;width:197px;overflow:hidden;"><i class="g">  0000</i></div>
<div class="m" style="left:318px;top:216px;width:396px;overflow:hidden;">ADD <i class="b">BYTE PTR DS:[EAX]</i><i class="g">,</i>AL</div>
<div class="m" style="left:5px;top:240px;"><i class="g">7348CD17</i></div>
<div class="m" style="left:113px;top:240px;width:197px;overflow:hidden;"><i class="g">  0000</i></div>
<div class="m" style="left:318px;top:240px;width:396px;overflow:hidden;">ADD <i class="b">BYTE PTR DS:[EAX]</i><i class="g">,</i>AL</div>
<div class="m" style="left:5px;top:264px;"><i class="g">7348CD19</i></div>
<div class="m" style="left:113px;top:264px;width:197px;overflow:hidden;"><i class="g">  0000</i></div>
<div class="m" style="left:318px;top:264px;width:396px;overflow:hidden;">ADD <i class="b">BYTE PTR DS:[EAX]</i><i class="g">,</i>AL</div>
<div class="m" style="left:5px;top:288px;"><i class="g">7348CD1B</i></div>
<div class="m" style="left:113px;top:288px;width:197px;overflow:hidden;"><i class="g">  0000</i></div>
<div class="m" style="left:318px;top:288px;width:396px;overflow:hidden;">ADD <i class="b">BYTE PTR DS:[EAX]</i><i class="g">,</i>AL</div>
<div class="m" style="left:5px;top:312px;"><i class="g">7348CD1D</i></div>
<div class="m" style="left:113px;top:312px;width:197px;overflow:hidden;"><i class="g">  0000</i></div>
<div class="m" style="left:318px;top:312px;width:396px;overflow:hidden;">ADD <i class="b">BYTE PTR DS:[EAX]</i><i class="g">,</i>AL</div>
<div class="m" style="left:5px;top:336px;"><i class="g">7348CD1F</i></div>
<div class="m" style="left:113px;top:336px;width:197px;overflow:hidden;"><i class="g">  0000</i></div>
<div class="m" style="left:318px;top:336px;width:396px;overflow:hidden;">ADD <i class="b">BYTE PTR DS:[EAX]</i><i class="g">,</i>AL</div>
<div class="m" style="left:5px;top:360px;"><i class="g">7348CD21</i></div>
<div class="m" style="left:113px;top:360px;width:197px;overflow:hidden;"><i class="g">  C74424 10 00000000</i></div>
<div class="a" style="left:366px;top:360px;width:252px;height:24px;background:#20ffff;"></div><div class="m" style="left:318px;top:360px;width:396px;overflow:hidden;">MOV <i class="b">DWORD PTR SS:[ESP+10]</i><i class="g">,</i><i class="o">40000000</i></div>
<div class="m" style="left:5px;top:384px;"><i class="g">7348CD29</i></div>
<div class="m" style="left:113px;top:384px;width:197px;overflow:hidden;"><i class="g">  FF15 F0143973</i></div>
<div class="a" style="left:318px;top:384px;width:48px;height:24px;background:#20ffff;"></div><div class="m" style="left:318px;top:384px;width:396px;overflow:hidden;">CALL <i class="b">DWORD PTR DS:[&lt;&amp;USER32.CreateWindowExA&gt;]</i></div>
<div class="m" style="left:722px;top:384px;"><i class="g">USER32.CreateWindowExA</i></div>
<div class="m" style="left:5px;top:408px;"><i class="g">7348CD2F</i></div>
<div class="m" style="left:113px;top:408px;width:197px;overflow:hidden;"><i class="g">  E9 E7D8F5FF</i></div>
<svg class="a" style="left:115px;top:412px" width="10" height="6" viewBox="0 0 10 6"><path d="M1 5L5 1L9 5" fill="none" stroke="#000" stroke-width="1.8"/></svg>
<div class="a" style="left:318px;top:408px;width:36px;height:24px;background:#ffff40;"></div><div class="a" style="left:366px;top:408px;width:204px;height:24px;background:#ffff40;"></div><div class="m" style="left:318px;top:408px;width:396px;overflow:hidden;">JMP MSVBVM60.733EA61B</div>
<div class="m" style="left:5px;top:432px;"><i class="g">7348CD34</i></div>
<div class="m" style="left:113px;top:432px;width:197px;overflow:hidden;"><i class="g">  0000</i></div>
<div class="m" style="left:318px;top:432px;width:396px;overflow:hidden;">ADD <i class="b">BYTE PTR DS:[EAX]</i><i class="g">,</i>AL</div>
<div class="m" style="left:5px;top:456px;"><i class="g">7348CD36</i></div>
<div class="m" style="left:113px;top:456px;width:197px;overflow:hidden;"><i class="g">  0000</i></div>
<div class="m" style="left:318px;top:456px;width:396px;overflow:hidden;">ADD <i class="b">BYTE PTR DS:[EAX]</i><i class="g">,</i>AL</div>
<div class="m" style="left:5px;top:480px;"><i class="g">7348CD38</i></div>
<div class="m" style="left:113px;top:480px;width:197px;overflow:hidden;"><i class="g">  0000</i></div>
<div class="m" style="left:318px;top:480px;width:396px;overflow:hidden;">ADD <i class="b">BYTE PTR DS:[EAX]</i><i class="g">,</i>AL</div>
<div class="m" style="left:5px;top:504px;"><i class="g">7348CD3A</i></div>
<div class="m" style="left:113px;top:504px;width:197px;overflow:hidden;"><i class="g">  0000</i></div>
<div class="m" style="left:318px;top:504px;width:396px;overflow:hidden;">ADD <i class="b">BYTE PTR DS:[EAX]</i><i class="g">,</i>AL</div>
<div class="m" style="left:5px;top:528px;"><i class="g">7348CD3C</i></div>
<div class="m" style="left:113px;top:528px;width:197px;overflow:hidden;"><i class="g">  0000</i></div>
<div class="m" style="left:318px;top:528px;width:396px;overflow:hidden;">ADD <i class="b">BYTE PTR DS:[EAX]</i><i class="g">,</i>AL</div>
<div class="m" style="left:5px;top:552px;"><i class="g">7348CD3E</i></div>
<div class="m" style="left:113px;top:552px;width:197px;overflow:hidden;"><i class="g">  0000</i></div>
<div class="m" style="left:318px;top:552px;width:396px;overflow:hidden;">ADD <i class="b">BYTE PTR DS:[EAX]</i><i class="g">,</i>AL</div>
<div class="m" style="left:5px;top:576px;"><i class="g">7348CD40</i></div>
<div class="m" style="left:113px;top:576px;width:197px;overflow:hidden;"><i class="g">  0000</i></div>
<div class="m" style="left:318px;top:576px;width:396px;overflow:hidden;">ADD <i class="b">BYTE PTR DS:[EAX]</i><i class="g">,</i>AL</div>
<div class="m" style="left:5px;top:600px;"><i class="g">7348CD42</i></div>
<div class="m" style="left:113px;top:600px;width:197px;overflow:hidden;"><i class="g">  0000</i></div>
<div class="m" style="left:318px;top:600px;width:396px;overflow:hidden;">ADD <i class="b">BYTE PTR DS:[EAX]</i><i class="g">,</i>AL</div>
<div class="m" style="left:5px;top:624px;"><i class="g">7348CD44</i></div>
<div class="m" style="left:113px;top:624px;width:197px;overflow:hidden;"><i class="g">  0000</i></div>
<div class="m" style="left:318px;top:624px;width:396px;overflow:hidden;">ADD <i class="b">BYTE PTR DS:[EAX]</i><i class="g">,</i>AL</div>
<div class="m" style="left:5px;top:648px;"><i class="g">7348CD46</i></div>
<div class="m" style="left:113px;top:648px;width:197px;overflow:hidden;"><i class="g">  0000</i></div>
<div class="m" style="left:318px;top:648px;width:396px;overflow:hidden;">ADD <i class="b">BYTE PTR DS:[EAX]</i><i class="g">,</i>AL</div>
<div class="m" style="left:5px;top:672px;"><i class="g">7348CD48</i></div>
<div class="m" style="left:113px;top:672px;width:197px;overflow:hidden;"><i class="g">  0000</i></div>
<div class="m" style="left:318px;top:672px;width:396px;overflow:hidden;">ADD <i class="b">BYTE PTR DS:[EAX]</i><i class="g">,</i>AL</div>
<div class="m" style="left:5px;top:696px;"><i class="g">7348CD4A</i></div>
<div class="m" style="left:113px;top:696px;width:197px;overflow:hidden;"><i class="g">  0000</i></div>
<div class="m" style="left:318px;top:696px;width:396px;overflow:hidden;">ADD <i class="b">BYTE PTR DS:[EAX]</i><i class="g">,</i>AL</div>
<div class="m" style="left:5px;top:720px;"><i class="g">7348CD4C</i></div>
<div class="m" style="left:113px;top:720px;width:197px;overflow:hidden;"><i class="g">  0000</i></div>
<div class="m" style="left:318px;top:720px;width:396px;overflow:hidden;">ADD <i class="b">BYTE PTR DS:[EAX]</i><i class="g">,</i>AL</div>
<div class="m" style="left:318px;top:744px;width:396px;overflow:hidden;"><i class="b">                [   ]</i></div>
</div>
<div class="a" style="left:1492px;top:146px;width:34px;height:780px;background:linear-gradient(90deg,#eceae2,#f6f5f0 40%,#fdfdfb);"></div><div class="a" style="left:1492px;top:146px;width:34px;height:34px;box-sizing:border-box;border:2px solid;border-color:#98b8fa #7aa2f8 #6a96f6 #86aaf8;background:linear-gradient(#fff 0,#fff 2px,#f2f3fe 4px,#e6eafc 13px,#e2e8fc 14px,#bfd2fa 15px,#b8ccf9 26px,#d6e2fc 28px,#fff 30px)"></div><div class="a" style="left:1494px;top:148px;width:2px;height:30px;background:linear-gradient(#fff,#e8eefe)"></div><div class="a" style="left:1522px;top:148px;width:2px;height:30px;background:linear-gradient(#fff,#e8eefe)"></div><svg class="a" style="left:1500px;top:156px" width="18" height="13" viewBox="0 0 18 13"><path d="M1.5 10.5L9 3L16.5 10.5" fill="none" stroke="#2352b3" stroke-width="4.4" stroke-linejoin="miter"/></svg><div class="a" style="left:1492px;top:892px;width:34px;height:34px;box-sizing:border-box;border:2px solid;border-color:#98b8fa #7aa2f8 #6a96f6 #86aaf8;background:linear-gradient(#fff 0,#fff 2px,#f2f3fe 4px,#e6eafc 13px,#e2e8fc 14px,#bfd2fa 15px,#b8ccf9 26px,#d6e2fc 28px,#fff 30px)"></div><div class="a" style="left:1494px;top:894px;width:2px;height:30px;background:linear-gradient(#fff,#e8eefe)"></div><div class="a" style="left:1522px;top:894px;width:2px;height:30px;background:linear-gradient(#fff,#e8eefe)"></div><svg class="a" style="left:1500px;top:903px" width="18" height="13" viewBox="0 0 18 13"><path d="M1.5 2.5L9 10L16.5 2.5" fill="none" stroke="#2352b3" stroke-width="4.4" stroke-linejoin="miter"/></svg><div class="a" style="left:1492px;top:858px;width:34px;height:34px;box-sizing:border-box;border:2px solid;border-color:#98b8fa #7aa2f8 #6a96f6 #86aaf8;background:linear-gradient(#fff 0,#fff 2px,#dfe7fd 4px,#c3d3fa 6px,#b9ccf9 15px,#b5c9f8 26px,#d6e2fc 28px,#fff 30px)"></div><div class="a" style="left:1494px;top:860px;width:2px;height:30px;background:linear-gradient(#fff,#e8eefe)"></div><div class="a" style="left:1522px;top:860px;width:2px;height:30px;background:linear-gradient(#fff,#e8eefe)"></div><div class="a" style="left:1502px;top:866px;width:12px;height:2px;background:#fff;"></div><div class="a" style="left:1504px;top:868px;width:12px;height:2px;background:#4a7af8;"></div><div class="a" style="left:1502px;top:870px;width:12px;height:2px;background:#fff;"></div><div class="a" style="left:1504px;top:872px;width:12px;height:2px;background:#4a7af8;"></div><div class="a" style="left:1502px;top:874px;width:12px;height:2px;background:#fff;"></div><div class="a" style="left:1504px;top:876px;width:12px;height:2px;background:#4a7af8;"></div><div class="a" style="left:1502px;top:878px;width:12px;height:2px;background:#fff;"></div><div class="a" style="left:1504px;top:880px;width:12px;height:2px;background:#4a7af8;"></div>
<div class="a" style="left:4px;top:930px;width:1522px;height:96px;background:#fffbf0;"></div>
<div class="cj c24" style="left:9px;top:929px;color:#808080">堆栈</div>
<div class="m" style="left:57px;top:930px;"><i class="g"> SS:[0012FAC0]=02C80000</i></div>
<div class="m" style="left:9px;top:954px;"><i class="g">EAX=00000000</i></div>
<div class="a" style="left:1530px;top:178px;width:734px;height:848px;background:#fffbf0;"></div>
<div class="a" style="left:1530px;top:146px;width:734px;height:32px;background:#c0c0c0;"></div><div class="a" style="left:1530px;top:146px;width:734px;height:2px;background:#fff;"></div><div class="a" style="left:1530px;top:176px;width:734px;height:2px;background:#000;"></div>
<div class="a" style="left:1530px;top:146px;width:2px;height:30px;background:#fff;"></div>
<div class="a" style="left:1532px;top:174px;width:732px;height:2px;background:#8a8a8a;"></div>
<div class="cj c24" style="left:1536px;top:149px">寄存器</div>
<div class="m" style="left:1608px;top:150px"> (FPU)</div>
<svg class="a" style="left:1981px;top:152px" width="11" height="18" viewBox="0 0 11 18"><path d="M10 1L2 9L10 17" fill="none" stroke="#000" stroke-width="2"/></svg>
<svg class="a" style="left:2041px;top:152px" width="11" height="18" viewBox="0 0 11 18"><path d="M10 1L2 9L10 17" fill="none" stroke="#000" stroke-width="2"/></svg>
<svg class="a" style="left:2101px;top:152px" width="11" height="18" viewBox="0 0 11 18"><path d="M10 1L2 9L10 17" fill="none" stroke="#000" stroke-width="2"/></svg>
<svg class="a" style="left:2161px;top:152px" width="11" height="18" viewBox="0 0 11 18"><path d="M10 1L2 9L10 17" fill="none" stroke="#000" stroke-width="2"/></svg>
<svg class="a" style="left:2221px;top:152px" width="11" height="18" viewBox="0 0 11 18"><path d="M10 1L2 9L10 17" fill="none" stroke="#000" stroke-width="2"/></svg>
<div class="m" style="left:1536px;top:178px;"><i class="g">EAX 00000000</i></div>
<div class="m" style="left:1536px;top:202px;"><i class="g">ECX 7349DAC0 MSVBVM60.7349DAC0</i></div>
<div class="m" style="left:1536px;top:226px;"><i class="g">EDX 00000007</i></div>
<div class="m" style="left:1536px;top:250px;"><i class="g">EBX 00000000</i></div>
<div class="m" style="left:1536px;top:274px;"><i class="g">ESP 0012FAB4</i></div>
<div class="m" style="left:1536px;top:298px;"><i class="g">EBP 0012FBE0</i></div>
<div class="m" style="left:1536px;top:322px;"><i class="g">ESI 00D6046C</i></div>
<div class="m" style="left:1536px;top:346px;"><i class="g">EDI 0000C0E7</i></div>
<div class="m" style="left:1536px;top:418px;"><i class="g">C 0  ES 0023 32   0(FFFFFFFF)</i></div>
<div class="m" style="left:1536px;top:442px;"><i class="g">P 1  CS 001B 32   0(FFFFFFFF)</i></div>
<div class="m" style="left:1536px;top:466px;"><i class="g">A 0  SS 0023 32   0(FFFFFFFF)</i></div>
<div class="m" style="left:1536px;top:490px;"><i class="g">Z 1  DS 0023 32   0(FFFFFFFF)</i></div>
<div class="m" style="left:1536px;top:514px;"><i class="g">S 0  FS 003B 32   7FFDF000(FFF)</i></div>
<div class="m" style="left:1536px;top:538px;"><i class="g">T 0  GS 0000 NULL</i></div>
<div class="m" style="left:1536px;top:562px;"><i class="g">D 0</i></div>
<div class="m" style="left:1536px;top:586px;"><i class="g">O 0  LastErr ERROR_CLASS_DOES_NOT_EXIST (00000583)</i></div>
<div class="m" style="left:1536px;top:622px;"><i class="g">EFL 00000246 (NO,NB,E,BE,NS,PE,GE,LE)</i></div>
<div class="m" style="left:1536px;top:658px;"><i class="g">ST0 empty 7.3425752709622997820</i></div>
<div class="m" style="left:1536px;top:682px;"><i class="g">ST1 empty 23.352865954565945830</i></div>
<div class="m" style="left:1536px;top:706px;"><i class="g">ST2 empty 111.29743639608906850</i></div>
<div class="m" style="left:1536px;top:730px;"><i class="g">ST3 empty 2035.6020761245674750</i></div>
<div class="m" style="left:1536px;top:754px;"><i class="g">ST4 empty 11345.481353325641980</i></div>
<div class="m" style="left:1536px;top:778px;"><i class="g">ST5 empty 17.843137254901961340</i></div>
<div class="m" style="left:1536px;top:802px;"><i class="g">ST6 empty 96.000000000000000000</i></div>
<div class="m" style="left:1536px;top:826px;"><i class="g">ST7 empty 82500.000000000000000</i></div>
<div class="m" style="left:1536px;top:850px;"><i class="g">               3 2 1 0      E S P U O Z D I</i></div>
<div class="m" style="left:1536px;top:874px;"><i class="g">FST 0020  Cond 0 0 0 0  Err 0 0 1 0 0 0 0 0  (GT)</i></div>
<div class="m" style="left:1536px;top:898px;"><i class="g">FCW 137F  Prec NEAR,64          1 1 1 1 1 1</i></div>
<div class="m" style="left:1536px;top:382px;"><i class="g">EIP </i><i class="r">7348CD01</i><i class="g"> MSVBVM60.7348CD01</i></div>
<div class="cj c24" style="left:1716px;top:417px;color:#808080">位</div>
<div class="cj c24" style="left:1716px;top:441px;color:#808080">位</div>
<div class="cj c24" style="left:1716px;top:465px;color:#808080">位</div>
<div class="cj c24" style="left:1716px;top:489px;color:#808080">位</div>
<div class="cj c24" style="left:1716px;top:513px;color:#808080">位</div>
<div class="cj c24" style="left:1824px;top:897px;color:#808080">掩码</div>
<div class="a" style="left:4px;top:1062px;width:1266px;height:288px;background:#fffbf0;"></div>
<div class="a" style="left:4px;top:1030px;width:1266px;height:32px;background:#c0c0c0;"></div><div class="a" style="left:4px;top:1030px;width:1266px;height:2px;background:#fff;"></div><div class="a" style="left:4px;top:1060px;width:1266px;height:2px;background:#000;"></div>
<div class="a" style="left:110px;top:1030px;width:2px;height:32px;background:#000;"></div>
<div class="a" style="left:110px;top:1062px;width:2px;height:288px;background:#808080;"></div>
<div class="a" style="left:686px;top:1030px;width:2px;height:32px;background:#000;"></div>
<div class="a" style="left:686px;top:1062px;width:2px;height:288px;background:#808080;"></div>
<div class="a" style="left:890px;top:1030px;width:2px;height:32px;background:#000;"></div>
<div class="a" style="left:890px;top:1062px;width:2px;height:288px;background:#808080;"></div>
<div class="a" style="left:112px;top:1032px;width:2px;height:28px;background:#fff;"></div>
<div class="a" style="left:114px;top:1058px;width:572px;height:2px;background:#8a8a8a;"></div>
<div class="a" style="left:684px;top:1032px;width:2px;height:28px;background:#8a8a8a;"></div>
<div class="a" style="left:688px;top:1032px;width:2px;height:28px;background:#fff;"></div>
<div class="a" style="left:690px;top:1058px;width:200px;height:2px;background:#8a8a8a;"></div>
<div class="a" style="left:888px;top:1032px;width:2px;height:28px;background:#8a8a8a;"></div>
<div class="a" style="left:255px;top:1062px;width:2px;height:288px;background:#c8c8c8;"></div>
<div class="a" style="left:399px;top:1062px;width:2px;height:288px;background:#c8c8c8;"></div>
<div class="a" style="left:543px;top:1062px;width:2px;height:288px;background:#c8c8c8;"></div>
<div class="cj c24" style="left:9px;top:1033px">地址</div>
<div class="m" style="left:117px;top:1034px">HEX</div><div class="cj c24" style="left:165px;top:1033px">数据</div>
<div class="m" style="left:694px;top:1034px">ASCII</div>
<div class="a" style="left:694px;top:1062px;width:196px;height:288px;overflow:hidden">
<div class="a" style="left:111px;top:3px;width:14px;height:14px;border:2px solid #808080"></div>
<div class="a" style="left:135px;top:3px;width:14px;height:14px;border:2px solid #808080"></div>
<div class="m" style="left:0px;top:0px;"><i class="g">........h    .....</i></div>
<div class="a" style="left:27px;top:27px;width:14px;height:14px;border:2px solid #808080"></div>
<div class="a" style="left:159px;top:27px;width:14px;height:14px;border:2px solid #808080"></div>
<div class="a" style="left:195px;top:27px;width:14px;height:14px;border:2px solid #808080"></div>
<div class="m" style="left:24px;top:24px;"><i class="g">  .........  4  .</i></div>
<div class="m" style="left:0px;top:48px;"><i class="g">................</i></div>
<div class="a" style="left:15px;top:75px;width:14px;height:14px;border:2px solid #808080"></div>
<div class="m" style="left:0px;top:72px;"><i class="g">?  .............</i></div>
<div class="a" style="left:75px;top:99px;width:14px;height:14px;border:2px solid #808080"></div>
<div class="m" style="left:0px;top:96px;"><i class="g">....03  .........</i></div>
<div class="a" style="left:123px;top:123px;width:14px;height:14px;border:2px solid #808080"></div>
<div class="m" style="left:0px;top:120px;"><i class="g">........€4  .....</i></div>
<div class="a" style="left:111px;top:147px;width:14px;height:14px;border:2px solid #808080"></div>
<div class="m" style="left:0px;top:144px;"><i class="g">........?  .....</i></div>
<div class="a" style="left:111px;top:171px;width:14px;height:14px;border:2px solid #808080"></div>
<div class="m" style="left:0px;top:168px;"><i class="g">........?  .....</i></div>
<div class="a" style="left:3px;top:195px;width:14px;height:14px;border:2px solid #808080"></div>
<div class="a" style="left:63px;top:195px;width:14px;height:14px;border:2px solid #808080"></div>
<div class="a" style="left:111px;top:195px;width:14px;height:14px;border:2px solid #808080"></div>
<div class="m" style="left:0px;top:192px;"><i class="g">  ...  .?  .......</i></div>
<div class="a" style="left:15px;top:219px;width:14px;height:14px;border:2px solid #808080"></div>
<div class="a" style="left:51px;top:219px;width:14px;height:14px;border:2px solid #808080"></div>
<div class="a" style="left:159px;top:219px;width:14px;height:14px;border:2px solid #808080"></div>
<div class="m" style="left:0px;top:216px;"><i class="g">?  .  .......  ...</i></div>
<div class="a" style="left:3px;top:243px;width:14px;height:14px;border:2px solid #808080"></div>
<div class="a" style="left:51px;top:243px;width:14px;height:14px;border:2px solid #808080"></div>
<div class="a" style="left:171px;top:243px;width:14px;height:14px;border:2px solid #808080"></div>
<div class="m" style="left:0px;top:240px;"><i class="g">  .?  .......?  .</i></div>
<div class="m" style="left:0px;top:264px;"><i class="g">@...............</i></div>
</div>
<div class="cj c24" style="left:694px;top:1085px;color:#808080;font-family:'Liberation Sans','Noto Sans CJK JP',sans-serif">蔵</div>
<div class="m" style="left:9px;top:1062px;"><i class="g">00416000</i></div>
<div class="m" style="left:117px;top:1062px;"><i class="g">00 00 00 00 00 00 00 00 68 1B 17 00 00 00 00 00</i></div>
<div class="m" style="left:9px;top:1086px;"><i class="g">00416010</i></div>
<div class="m" style="left:117px;top:1086px;"><i class="g">C8 9C 15 00 00 00 00 00 00 00 00 00 10 34 17 00</i></div>
<div class="m" style="left:9px;top:1110px;"><i class="g">00416020</i></div>
<div class="m" style="left:117px;top:1110px;"><i class="g">00 00 00 00 00 00 00 00 00 00 00 00 00 00 00 00</i></div>
<div class="m" style="left:9px;top:1134px;"><i class="g">00416030</i></div>
<div class="m" style="left:117px;top:1134px;"><i class="g">A0 33 17 00 00 00 00 00 00 00 00 00 00 00 00 00</i></div>
<div class="m" style="left:9px;top:1158px;"><i class="g">00416040</i></div>
<div class="m" style="left:117px;top:1158px;"><i class="g">00 00 00 00 30 33 17 00 00 00 00 00 00 00 00 00</i></div>
<div class="m" style="left:9px;top:1182px;"><i class="g">00416050</i></div>
<div class="m" style="left:117px;top:1182px;"><i class="g">00 00 00 00 00 00 00 00 80 34 17 00 00 00 00 00</i></div>
<div class="m" style="left:9px;top:1206px;"><i class="g">00416060</i></div>
<div class="m" style="left:117px;top:1206px;"><i class="g">00 00 00 00 00 00 00 00 F0 34 17 00 00 00 00 00</i></div>
<div class="m" style="left:9px;top:1230px;"><i class="g">00416070</i></div>
<div class="m" style="left:117px;top:1230px;"><i class="g">00 00 00 00 00 00 00 00 C0 32 17 00 00 00 00 00</i></div>
<div class="m" style="left:9px;top:1254px;"><i class="g">00416080</i></div>
<div class="m" style="left:117px;top:1254px;"><i class="g">03 00 00 00 01 00 92 00 04 00 00 00 00 00 00 00</i></div>
<div class="m" style="left:9px;top:1278px;"><i class="g">00416090</i></div>
<div class="m" style="left:117px;top:1278px;"><i class="g">D0 37 16 00 05 00 00 00 00 00 00 00 11 00 00 00</i></div>
<div class="m" style="left:9px;top:1302px;"><i class="g">004160A0</i></div>
<div class="m" style="left:117px;top:1302px;"><i class="g">01 00 92 00 01 00 00 00 00 00 00 00 F0 1D 17 00</i></div>
<div class="m" style="left:9px;top:1326px;"><i class="g">004160B0</i></div>
<div class="m" style="left:117px;top:1326px;"><i class="g">40 00 00 00 00 00 00 00 00 00 00 00 00 00 00 00</i></div>
<div class="a" style="left:1270px;top:1030px;width:34px;height:320px;background:linear-gradient(90deg,#eceae2,#f6f5f0 40%,#fdfdfb);"></div><div class="a" style="left:1270px;top:1030px;width:34px;height:34px;box-sizing:border-box;border:2px solid;border-color:#98b8fa #7aa2f8 #6a96f6 #86aaf8;background:linear-gradient(#fff 0,#fff 2px,#f2f3fe 4px,#e6eafc 13px,#e2e8fc 14px,#bfd2fa 15px,#b8ccf9 26px,#d6e2fc 28px,#fff 30px)"></div><div class="a" style="left:1272px;top:1032px;width:2px;height:30px;background:linear-gradient(#fff,#e8eefe)"></div><div class="a" style="left:1300px;top:1032px;width:2px;height:30px;background:linear-gradient(#fff,#e8eefe)"></div><svg class="a" style="left:1278px;top:1040px" width="18" height="13" viewBox="0 0 18 13"><path d="M1.5 10.5L9 3L16.5 10.5" fill="none" stroke="#2352b3" stroke-width="4.4" stroke-linejoin="miter"/></svg><div class="a" style="left:1270px;top:1316px;width:34px;height:34px;box-sizing:border-box;border:2px solid;border-color:#98b8fa #7aa2f8 #6a96f6 #86aaf8;background:linear-gradient(#fff 0,#fff 2px,#f2f3fe 4px,#e6eafc 13px,#e2e8fc 14px,#bfd2fa 15px,#b8ccf9 26px,#d6e2fc 28px,#fff 30px)"></div><div class="a" style="left:1272px;top:1318px;width:2px;height:30px;background:linear-gradient(#fff,#e8eefe)"></div><div class="a" style="left:1300px;top:1318px;width:2px;height:30px;background:linear-gradient(#fff,#e8eefe)"></div><svg class="a" style="left:1278px;top:1327px" width="18" height="13" viewBox="0 0 18 13"><path d="M1.5 2.5L9 10L16.5 2.5" fill="none" stroke="#2352b3" stroke-width="4.4" stroke-linejoin="miter"/></svg><div class="a" style="left:1270px;top:1064px;width:34px;height:34px;box-sizing:border-box;border:2px solid;border-color:#98b8fa #7aa2f8 #6a96f6 #86aaf8;background:linear-gradient(#fff 0,#fff 2px,#dfe7fd 4px,#c3d3fa 6px,#b9ccf9 15px,#b5c9f8 26px,#d6e2fc 28px,#fff 30px)"></div><div class="a" style="left:1272px;top:1066px;width:2px;height:30px;background:linear-gradient(#fff,#e8eefe)"></div><div class="a" style="left:1300px;top:1066px;width:2px;height:30px;background:linear-gradient(#fff,#e8eefe)"></div><div class="a" style="left:1280px;top:1072px;width:12px;height:2px;background:#fff;"></div><div class="a" style="left:1282px;top:1074px;width:12px;height:2px;background:#4a7af8;"></div><div class="a" style="left:1280px;top:1076px;width:12px;height:2px;background:#fff;"></div><div class="a" style="left:1282px;top:1078px;width:12px;height:2px;background:#4a7af8;"></div><div class="a" style="left:1280px;top:1080px;width:12px;height:2px;background:#fff;"></div><div class="a" style="left:1282px;top:1082px;width:12px;height:2px;background:#4a7af8;"></div><div class="a" style="left:1280px;top:1084px;width:12px;height:2px;background:#fff;"></div><div class="a" style="left:1282px;top:1086px;width:12px;height:2px;background:#4a7af8;"></div>
<div class="a" style="left:1304px;top:1026px;width:962px;height:328px;background:#000;"></div>
<div class="a" style="left:1308px;top:1030px;width:922px;height:320px;background:#fffbf0;"></div>
<div class="a" style="left:1308px;top:1030px;width:106px;height:24px;background:#000;"></div>
<div class="a" style="left:1308px;top:1078px;width:922px;height:24px;background:#c0c0c0;"></div>
<div class="a" style="left:1414px;top:1030px;width:2px;height:320px;background:#808080;"></div>
<div class="a" style="left:1534px;top:1030px;width:2px;height:320px;background:#808080;"></div>
<div class="a" style="left:1308px;top:1030px;width:922px;height:320px;overflow:hidden">
<div class="m" style="left:5px;top:0px;"><i class="w">$ ==&gt;</i></div>
<div class="m" style="left:125px;top:0px;">00040000</div>
<div class="m" style="left:5px;top:24px;"><i class="g">$+4</i></div>
<div class="m" style="left:125px;top:24px;">0000C0E7</div>
<div class="m" style="left:5px;top:48px;">$+8</div>
<div class="m" style="left:125px;top:48px;">00D606D0</div>
<div class="m" style="left:233px;top:48px;">ASCII &quot;Crouz CrackMe-1 : Setup&quot;</div>
<div class="m" style="left:5px;top:72px;"><i class="g">$+C</i></div>
<div class="m" style="left:125px;top:72px;">02C80000</div>
<div class="m" style="left:5px;top:96px;"><i class="g">$+10</i></div>
<div class="m" style="left:125px;top:96px;">00000000</div>
<div class="m" style="left:5px;top:120px;"><i class="g">$+14</i></div>
<div class="m" style="left:125px;top:120px;">FFFFFFFF</div>
<div class="m" style="left:5px;top:144px;"><i class="g">$+18</i></div>
<div class="m" style="left:125px;top:144px;">00000107</div>
<div class="m" style="left:5px;top:168px;"><i class="g">$+1C</i></div>
<div class="m" style="left:125px;top:168px;">000000D3</div>
<div class="m" style="left:5px;top:192px;"><i class="g">$+20</i></div>
<div class="m" style="left:125px;top:192px;">001A0520</div>
<div class="m" style="left:5px;top:216px;"><i class="g">$+24</i></div>
<div class="m" style="left:125px;top:216px;">00000000</div>
<div class="m" style="left:5px;top:240px;"><i class="g">$+28</i></div>
<div class="m" style="left:125px;top:240px;">73390000</div>
<div class="m" style="left:233px;top:240px;">OFFSET MSVBVM60.#1374</div>
<div class="m" style="left:5px;top:264px;"><i class="g">$+2C</i></div>
<div class="m" style="left:125px;top:264px;">00000000</div>
<div class="m" style="left:5px;top:288px;"><i class="g">$+30</i></div>
<div class="m" style="left:125px;top:288px;">00D55818</div>
<div class="m" style="left:5px;top:312px;"><i class="g">$+34</i></div>
<div class="m" style="left:125px;top:312px;">00000000</div>
</div>
<div class="a" style="left:2230px;top:1030px;width:34px;height:320px;background:linear-gradient(90deg,#eceae2,#f6f5f0 40%,#fdfdfb);"></div><div class="a" style="left:2230px;top:1030px;width:34px;height:34px;box-sizing:border-box;border:2px solid;border-color:#98b8fa #7aa2f8 #6a96f6 #86aaf8;background:linear-gradient(#fff 0,#fff 2px,#f2f3fe 4px,#e6eafc 13px,#e2e8fc 14px,#bfd2fa 15px,#b8ccf9 26px,#d6e2fc 28px,#fff 30px)"></div><div class="a" style="left:2232px;top:1032px;width:2px;height:30px;background:linear-gradient(#fff,#e8eefe)"></div><div class="a" style="left:2260px;top:1032px;width:2px;height:30px;background:linear-gradient(#fff,#e8eefe)"></div><svg class="a" style="left:2238px;top:1040px" width="18" height="13" viewBox="0 0 18 13"><path d="M1.5 10.5L9 3L16.5 10.5" fill="none" stroke="#2352b3" stroke-width="4.4" stroke-linejoin="miter"/></svg><div class="a" style="left:2230px;top:1316px;width:34px;height:34px;box-sizing:border-box;border:2px solid;border-color:#98b8fa #7aa2f8 #6a96f6 #86aaf8;background:linear-gradient(#fff 0,#fff 2px,#f2f3fe 4px,#e6eafc 13px,#e2e8fc 14px,#bfd2fa 15px,#b8ccf9 26px,#d6e2fc 28px,#fff 30px)"></div><div class="a" style="left:2232px;top:1318px;width:2px;height:30px;background:linear-gradient(#fff,#e8eefe)"></div><div class="a" style="left:2260px;top:1318px;width:2px;height:30px;background:linear-gradient(#fff,#e8eefe)"></div><svg class="a" style="left:2238px;top:1327px" width="18" height="13" viewBox="0 0 18 13"><path d="M1.5 2.5L9 10L16.5 2.5" fill="none" stroke="#2352b3" stroke-width="4.4" stroke-linejoin="miter"/></svg><div class="a" style="left:2230px;top:1264px;width:34px;height:34px;box-sizing:border-box;border:2px solid;border-color:#98b8fa #7aa2f8 #6a96f6 #86aaf8;background:linear-gradient(#fff 0,#fff 2px,#dfe7fd 4px,#c3d3fa 6px,#b9ccf9 15px,#b5c9f8 26px,#d6e2fc 28px,#fff 30px)"></div><div class="a" style="left:2232px;top:1266px;width:2px;height:30px;background:linear-gradient(#fff,#e8eefe)"></div><div class="a" style="left:2260px;top:1266px;width:2px;height:30px;background:linear-gradient(#fff,#e8eefe)"></div><div class="a" style="left:2240px;top:1272px;width:12px;height:2px;background:#fff;"></div><div class="a" style="left:2242px;top:1274px;width:12px;height:2px;background:#4a7af8;"></div><div class="a" style="left:2240px;top:1276px;width:12px;height:2px;background:#fff;"></div><div class="a" style="left:2242px;top:1278px;width:12px;height:2px;background:#4a7af8;"></div><div class="a" style="left:2240px;top:1280px;width:12px;height:2px;background:#fff;"></div><div class="a" style="left:2242px;top:1282px;width:12px;height:2px;background:#4a7af8;"></div><div class="a" style="left:2240px;top:1284px;width:12px;height:2px;background:#fff;"></div><div class="a" style="left:2242px;top:1286px;width:12px;height:2px;background:#4a7af8;"></div>
<div class="a" style="left:296px;top:222px;width:425px;height:29px;background:transparent;box-sizing:border-box;border:4px solid #ec1c24"></div>
<div class="a" style="left:2px;top:532px;width:719px;height:35px;background:transparent;box-sizing:border-box;border:4px solid #ec1c24"></div>
<div class="a" style="left:1302px;top:1074px;width:701px;height:31px;background:transparent;box-sizing:border-box;border:4px solid #ec1c24"></div>
<svg class="a" style="left:0;top:0" width="2266" height="1442" viewBox="0 0 2266 1442"><path d="M722.0 234.0L804.2 352.1" stroke="#ec1c24" stroke-width="4.5" stroke-linecap="round"/><path d="M813.6 365.6L793.5 352.8L804.2 352.1L808.6 342.3Z" fill="#ec1c24"/><path d="M728.0 538.0L798.7 433.7" stroke="#ec1c24" stroke-width="4.5" stroke-linecap="round"/><path d="M808.0 420.0L803.3 443.4L798.7 433.7L788.0 433.0Z" fill="#ec1c24"/></svg>
<div class="cj c30" style="left:812px;top:382px">2.</div>
<div class="cj c30" style="left:847.6px;top:382px">自己写的的代码的位置不同，应该就是这个问题</div>
<div class="cj c30" style="left:1574px;top:1129px">1.</div>
<div class="cj c30" style="left:1610px;top:1129px">堆栈窗口显示，窗口标题位于</div>
<div class="cj c30" style="left:2011px;top:1129px;font-size:25px">ESP</div>
<div class="cj c30" style="left:2071px;top:1129px">+</div>
<div class="cj c30" style="left:2103px;top:1129px;font-size:28px">8</div>
<div class="cj c30" style="left:2124px;top:1129px;font-size:28px">,</div>
<div class="cj c30" style="left:1572.5px;top:1172px">那以此类推，</div>
<div class="cj c30" style="left:1753px;top:1172px;font-size:28px">Style</div>
<div class="cj c30" style="left:1830px;top:1172px">应该位于</div>
<div class="cj c30" style="left:1961px;top:1172px;font-size:25px">ESP</div>
<div class="cj c30" style="left:2021px;top:1172px">+</div>
<div class="cj c30" style="left:2052px;top:1172px;font-size:28px">C</div></body></html>
